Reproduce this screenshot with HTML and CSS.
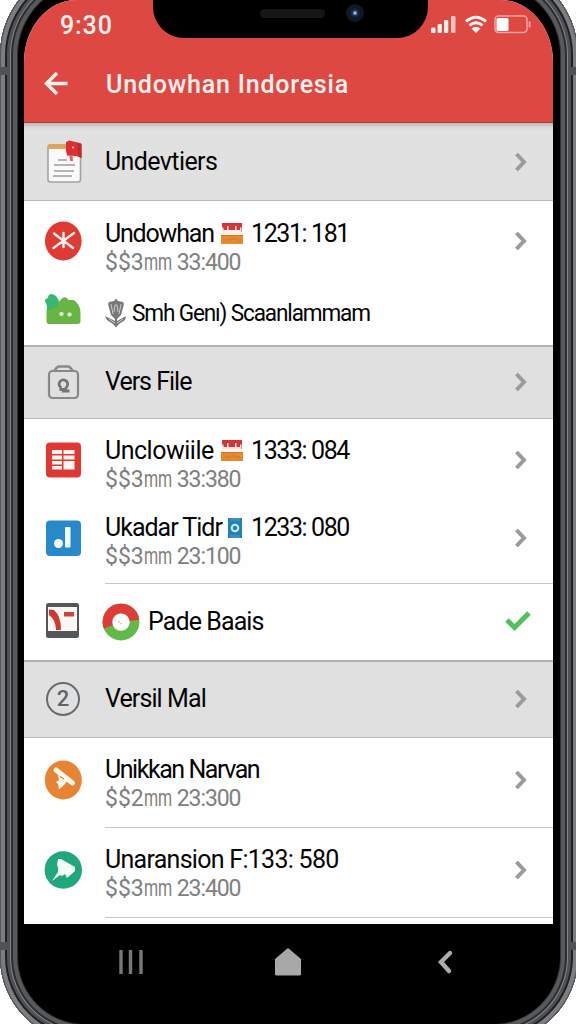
FILE: index.html
```html
<!DOCTYPE html>
<html lang="en">
<head>
<meta charset="utf-8">
<title>Undowhan Indoresia</title>
<link rel="stylesheet" href="styles.css">
</head>
<body>
<svg class="defs" width="0" height="0" aria-hidden="true">
  <symbol id="chevron" viewBox="0 0 14 20"><path d="M2.500 2 10 10l-7.500 8" fill="none" stroke="#9b9b9b" stroke-width="4"/></symbol>
  <symbol id="stall" viewBox="0 0 22 22">
    <path d="M1 0h20v9H1z" fill="#d63438"/><path d="M1 8V4.500h1.500V7H6V3h1.500v4H14V3h1.500v4H19V4.500h1.500V9H1z" fill="#fbe9e5"/>
    <path d="M0 9h22v3.500H0z" fill="#fff4e7"/>
    <path d="M0 12h22v9H0z" fill="#e68a31"/><path d="M0 12.500h22M4 17h4l2-1h4l2 1h3" fill="none" stroke="#cf7830"/>
  </symbol>
</svg>
<div class="phone">
  <i class="seam seam-left-top"></i><i class="seam seam-left-bottom"></i>
  <i class="seam seam-right-top"></i><i class="seam seam-right-bottom"></i>
  <div class="display">
    <header class="header">
      <div class="notch"><span class="speaker"></span><span class="camera"></span></div>
      <div class="status">
        <span class="clock">9:30</span>
        <svg class="status-icons" width="102" height="20" viewBox="0 0 102 20">
          <g fill="#fff0ed"><rect x="0" y="12.5" width="4.500" height="5.500" rx="1.2"/><rect x="6.600" y="9" width="4.200" height="9" rx="1"/><rect x="13" y="5" width="4.300" height="13" rx="1"/><rect x="20" y="1" width="4.500" height="17" rx="1" fill="#f8c3bd"/></g>
          <g fill="none" stroke="#fff4f1" stroke-width="3"><path d="M35 6.500q10-8.500 20 0M38.500 10.300q6.500-5.200 13 0"/></g><path d="M40.500 13.500q4.500-3.500 9 0L45 18z" fill="#fff4f1"/>
          <rect x="64" y="1" width="32" height="16.500" rx="3.500" fill="none" stroke="#f2a59f" stroke-width="1.500"/><rect x="65.500" y="3" width="12" height="13" rx="1.500" fill="#fff"/><path d="M98.600 6.500v6" stroke="#f2a59f" stroke-width="1.800"/>
        </svg>
      </div>
      <div class="appbar">
        <svg class="back" width="26" height="26" viewBox="0 0 26 26"><path d="M24.500 12.500H3.500M14 2 3.500 12.500 14 23" fill="none" stroke="#fff1ee" stroke-width="3.400"/></svg>
        <h1 class="heading">Undowhan Indoresia</h1>
      </div>
    </header>

    <main class="list">
      <section class="section section-first">
        <svg class="icon" viewBox="0 0 40 44">
          <rect x="4" y="5" width="32.500" height="37" rx="2.500" fill="#fafafa" stroke="#a1a1a8" stroke-width="1.600"/>
          <path d="M4 9V5.500q0-1.500 1.500-1.500H26v5z" fill="#dda45c"/>
          <path d="M14 20h9M10 25h21M10 31h20M9 36h19" stroke="#9c9ca2" stroke-width="1.400"/>
          <path d="m22 2 3-1.500L36 3q1.500 0 1.500 2v13L32 16l-9-.500-1-5z" fill="#dc3033"/><path d="m33 3 4.500 1v14l-3-2z" fill="#bd2c2e"/><path d="m27 15 .500 6" stroke="#e65f58" stroke-width="3"/><circle cx="29" cy="7.500" r="1" fill="#ffd5d0"/>
        </svg>
        <span class="title t-undev">Undevtiers</span><svg class="chev"><use href="#chevron"/></svg>
      </section>

      <article class="row row-undowhan">
        <svg class="icon" viewBox="0 0 40 44"><ellipse cx="19.300" cy="22" rx="18.300" ry="19.500" fill="#df3a34"/><path d="m10 14.500 19 14.500M30 14 9.500 29M19.500 14v8M19.500 22v6" stroke="#fff1ec" stroke-width="2.400" stroke-linecap="round"/></svg>
        <div class="copy"><div class="title"><span class="lead t-undowhan">Undowhan</span><svg class="stall"><use href="#stall"/></svg><span class="t-num">1231: 181</span></div><div class="sub">$$3<span class="unit">mm</span><span class="amount">33:400</span></div></div>
        <svg class="chev"><use href="#chevron"/></svg>
      </article>

      <article class="row row-smh">
        <svg class="icon" viewBox="0 0 40 44"><path d="M2.500 32V22q0-5 6-8l6-1 4-4q4-2 6 2l5 0q7 4 7 13v8q0 3-3 3H5q-2.500 0-2.500-3z" fill="#67b543"/><path d="M2 14q-3-4 2-5 0-4 4-4l4 2 2 3q2 3-1 5l1 3-5 1-3 2q-4 0-3-4z" fill="#36b96e"/><circle cx="17.500" cy="25" r="2.100" fill="#f3ffe9"/><circle cx="25.500" cy="25.500" r="2.100" fill="#f3ffe9"/></svg>
        <div class="copy copy-line">
          <svg class="trophy" viewBox="0 0 22 30"><path d="m4 4 5-1 2-2.500L13 3l5 1 1 2-3 11-4 4v2l9-5-1 4-6 4-3 3.500L8 26l-6-4-2-4 10 5v-2l-4-4L3 6z" fill="#77787a"/><path d="m6 6 2 10M16 6l-2 10M9 14l1-7h2l1 7M4 21l6 4M18 21l-6 4" stroke="#deded9" stroke-width=".8" fill="none"/></svg>
          <span class="title t-smh">Smh Genı) Scaanlammam</span>
        </div>
      </article>

      <section class="section section-file">
        <svg class="icon" viewBox="0 0 40 44"><rect x="5" y="11" width="29" height="27" rx="3.500" fill="none" stroke="#88898a" stroke-width="2.200"/><path d="m10 11 3-3.500q1-1 2-1h9q1 0 2 1l3 3.500" fill="none" stroke="#88898a" stroke-width="2.600"/><path d="M17.500 28a4.300 4.300 0 1 1 5.500-1.500l-3 4.500h5.500M15.500 29.500h5" fill="none" stroke="#747576" stroke-width="2.800"/></svg>
        <span class="title t-vers">Vers File</span><svg class="chev"><use href="#chevron"/></svg>
      </section>

      <article class="row row-unclow">
        <svg class="icon" viewBox="0 0 40 44"><rect x="2" y="4.500" width="35" height="35" rx="4" fill="#df3833"/><path d="M8 12h10v4H8zm11.500 0h11v4h-11zM8 17.500h10v4H8zm11.500 0h11v4h-11zM8 23h10v3.500H8zm11.500 0h11v8.500h-11zM8 28h10v3.500H8z" fill="#fff6f2"/></svg>
        <div class="copy"><div class="title"><span class="lead t-unclow">Unclowiile</span><svg class="stall"><use href="#stall"/></svg><span class="t-num">1333: 084</span></div><div class="sub">$$3<span class="unit">mm</span><span class="amount">33:380</span></div></div>
        <svg class="chev"><use href="#chevron"/></svg>
      </article>

      <article class="row row-ukadar">
        <svg class="icon" viewBox="0 0 40 44"><rect x="2" y="4.500" width="35" height="35.500" rx="4" fill="#268aca"/><rect x="21" y="11" width="5.500" height="20.500" rx="1" fill="#f3fcff"/><circle cx="14.500" cy="27.500" r="4.500" fill="#f3fcff"/></svg>
        <div class="copy"><div class="title"><span class="lead t-ukadar">Ukadar Tidr</span><svg class="badge" viewBox="0 0 15 20"><path d="M0 0h14v20H0z" fill="#257fb5"/><path d="M2 0h10v3H2zM2 17h10v3H2z" fill="#3990c5"/><circle cx="7" cy="10" r="3.300" fill="#2386bc" stroke="#c9efff" stroke-width="2"/></svg><span class="t-num">1233: 080</span></div><div class="sub">$$3<span class="unit">mm</span><span class="amount">23:100</span></div></div>
        <svg class="chev"><use href="#chevron"/></svg>
      </article>

      <article class="row row-pade">
        <svg class="icon" viewBox="0 0 40 44"><rect x="2" y="5" width="33" height="35" rx="2.500" fill="#55565a"/><path d="M4 9h29v24H4z" fill="#faf7f5"/><path d="M5 11.500 10 12q7 6 7 20h-5q0-10-7-15z" fill="#cd3931"/><path d="M20 14h10v4.500H20z" fill="#c94638"/></svg>
        <div class="copy copy-line">
          <svg class="donut" viewBox="0 0 38 38"><circle cx="19" cy="19" r="13.600" fill="#fff" stroke="#63b947" stroke-width="9.600"/><path d="M6.300 23.900A13.600 13.600 0 1 1 32.500 17.300" fill="none" stroke="#df3c38" stroke-width="9.600"/><circle cx="17" cy="19" r=".7" fill="#c88"/><path d="m18 21 2-1" stroke="#aaa" stroke-width=".7"/></svg>
          <span class="title t-pade">Pade Baais</span>
        </div>
        <svg class="check" viewBox="0 0 28 22"><path d="m3 10 7.500 7.500L25 3" fill="none" stroke="#50c15e" stroke-width="5"/></svg>
      </article>

      <section class="section section-mal">
        <span class="icon number">2</span>
        <span class="title t-versil">Versil Mal</span><svg class="chev"><use href="#chevron"/></svg>
      </section>

      <article class="row row-unikkan">
        <svg class="icon" viewBox="0 0 40 44"><ellipse cx="19.300" cy="22" rx="18.500" ry="19.500" fill="#e98334"/><path d="m12 12 16.500 13" stroke="#fff8e9" stroke-width="5" stroke-linecap="round"/><path d="m14 17 9 6-2 3-6 5.500-1-5.500-2-2 3-2z" fill="#fff8e9"/><path d="m16 18.500 4 2.500" fill="none" stroke="#9b7048"/></svg>
        <div class="copy"><div class="title t-unikkan">Unikkan Narvan</div><div class="sub">$$2<span class="unit">mm</span><span class="amount">23:300</span></div></div>
        <svg class="chev"><use href="#chevron"/></svg>
      </article>

      <article class="row row-unaran">
        <svg class="icon" viewBox="0 0 40 44"><circle cx="19.300" cy="22" r="18.700" fill="#21a77e"/><path d="m14 11 3 0 14 8v4l-8 7-2-4-3 2-2-1-8 6 6-9q1-4-1-7z" fill="#f2fff7"/></svg>
        <div class="copy"><div class="title t-unaran">Unaransion F:133: 580</div><div class="sub">$$3<span class="unit">mm</span><span class="amount">23:400</span></div></div>
        <svg class="chev"><use href="#chevron"/></svg>
      </article>
    </main>
  </div>
  <nav class="nav">
    <svg width="28" height="28" viewBox="0 0 28 28"><path d="M4 2v24M13.500 2v24M24 2v24" stroke="#777" stroke-width="3.400"/></svg>
    <svg class="home" width="30" height="30" viewBox="0 0 30 30"><path d="M2 12 15 1l13 11v15q0 1.500-1.500 1.500h-23Q2 28.500 2 27z" fill="#a8a8a8"/></svg>
    <svg width="18" height="26" viewBox="0 0 18 26"><path d="m13 4-9 9 8 9" fill="none" stroke="#adadad" stroke-width="4.400" stroke-linecap="round"/></svg>
  </nav>
</div>
</body>
</html>
```
FILE: styles.css
```css
* { box-sizing: border-box; }
html, body { height: 1024px; overflow: hidden; }
body { margin: 0; background: #fff; color: #050505; font-family: Roboto, "Liberation Sans", sans-serif; display: flow-root; }
svg { display: block; flex: none; }
.defs { position: absolute; }

.phone {
  position: relative;
  width: 578px; height: 1077px; margin-top: -35px; padding: 35px 25px 0 24px;
  border-radius: 90px 90px 85px 85px;
  background: #000;
  box-shadow: inset 0 0 0 1px #555, inset 0 0 0 5px #7c7d80, inset 0 0 0 7px #202123,
    inset 0 0 0 10px #505153, inset 0 0 0 11px #858689, inset 0 0 0 13px #2c2d2f, inset 0 0 0 17px #58595b, inset 0 0 0 18px #303133;
}
.seam { position: absolute; width: 7px; height: 8px; background: #515254; }
.seam-left-top { left: 0; top: 102px; }
.seam-left-bottom { left: 0; top: 977px; }
.seam-right-top { right: 0; top: 102px; }
.seam-right-bottom { right: 0; top: 977px; }

.display { height: 924px; background: #fefefe; border-radius: 52px 52px 0 0 / 62px 62px 0 0; overflow: hidden; }
.header { height: 123px; position: relative; background: #dd4942; border-bottom: 1px solid #b93e37; color: #fff1ee; }
.notch { position: absolute; left: 129px; top: -10px; width: 275px; height: 48px; background: #000; border-radius: 0 0 31px 31px; }
.speaker { position: absolute; left: 107px; top: 19px; width: 65px; height: 9px; border-radius: 5px; background: #151617; }
.camera { position: absolute; left: 193px; top: 14px; width: 18px; height: 18px; border-radius: 50%; background: radial-gradient(circle, #9ab7ef 0 1px, #1b2f58 2.5px 3px, #101820 5px); }
.status { height: 50px; padding: 0 20px 0 36px; display: flex; align-items: center; justify-content: space-between; }
.clock { font-size: 25px; letter-spacing: .9px; font-weight: 500; }
.appbar { height: 72px; display: flex; align-items: center; padding: 0 0 3px 19px; }
.heading { margin: 0 0 0 37px; font-size: 25px; line-height: 32px; font-weight: 500; letter-spacing: .8px; white-space: nowrap; }
.back { position: relative; top: -1px; }

.section, .row { display: flex; padding: 0 25px 0 20px; }
.section { align-items: center; background: #e0e0e0; border-bottom: 1px solid #bababa; }
.section-first { height: 78px; background: linear-gradient(#b9b9b9, #dcdcdc 5px, #e1e1e1 9px); }
.section-file { height: 74px; padding-bottom: 2px; border-top: 2px solid #b4b4b4; }
.section-mal { height: 78px; padding-bottom: 1px; border-top: 2px solid #b0b0b0; }
.icon { width: 40px; height: 44px; margin-right: 21px; flex: none; }
.title { font-size: 25px; line-height: 30px; white-space: nowrap; }
.section .title { flex: 1; }
.chev { width: 14px; height: 20px; }

.row { align-items: flex-start; }
.row .icon { margin-top: var(--icon); }
.row .chev { margin-top: calc(var(--icon) + 12px); }
.copy { flex: 1; padding-top: var(--copy); }
.copy .title { display: flex; align-items: center; }
.copy-line { display: flex; align-items: center; padding-top: 0; height: 57px; }
.sub { font-size: 23px; line-height: 27px; color: #808080; white-space: nowrap; display: flex; }
.unit { width: 33px; transform: scaleX(.7); transform-origin: left; }
.amount { letter-spacing: -1.1px; }
.lead { width: 116px; }
.stall { width: 22px; height: 22px; margin-right: 8px; }
.badge { width: 15px; height: 20px; margin: 0 8px 0 7px; }
.trophy { width: 22px; height: 30px; margin-right: 5px; }
.donut { width: 38px; height: 38px; margin: 0 8px 0 -3px; }
.check { width: 28px; height: 22px; margin: 26px -4px 0 0; }
.number { width: 34px; height: 34px; margin: 0 25px 0 2px; border: 2px solid #696a6b; border-radius: 50%; color: #626364; font-size: 22px; line-height: 30px; text-align: center; font-weight: 500; }

.t-undev { letter-spacing: -.6px; }
.t-undowhan { letter-spacing: -1.2px; }
.t-num { letter-spacing: -1.4px; }
.t-smh { font-size: 24px; letter-spacing: -1.2px; transform: scaleX(.94); transform-origin: left; }
.t-vers { letter-spacing: -1px; }
.t-unclow { letter-spacing: -.5px; }
.t-ukadar { letter-spacing: -1px; }
.t-pade, .t-versil { letter-spacing: -.9px; }
.t-unikkan { letter-spacing: -1.45px; }
.t-unaran { letter-spacing: -.72px; }

.row-undowhan { height: 83px; --icon: 18px; --copy: 18px; }
.row-smh { height: 61px; --icon: 5px; }
.row-unclow { height: 83px; --icon: 19px; --copy: 17px; }
.row-ukadar { height: 82px; --icon: 14px; --copy: 11px; }
.row-pade { height: 76px; --icon: 14px; }
.row-pade .copy-line { height: 75px; }
.row-unikkan { height: 90px; --icon: 20px; --copy: 17px; }
.row-unaran { height: 90px; --icon: 20px; --copy: 17px; }
.row-ukadar, .row-unikkan, .row-unaran { background: linear-gradient(#c7c7c7, #c7c7c7) 81px 100% / 100% 1.5px no-repeat; }

.nav { height: 76px; display: flex; align-items: center; justify-content: space-between; padding: 0 98px 0 93px; }
.home { transform: translateX(-3px); }
```
